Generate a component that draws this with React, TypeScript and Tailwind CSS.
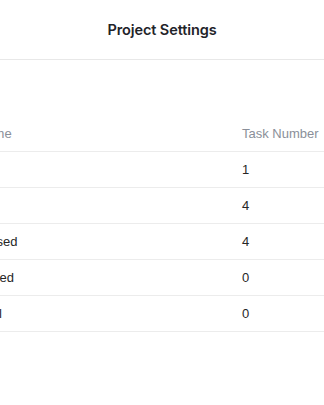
import React from 'react';

const statuses = [
  { name: 'QA', count: 1 },
  { name: 'UI', count: 4 },
  { name: 'Closed', count: 4 },
  { name: 'Saved', count: 0 },
  { name: 'Trial', count: 0 },
];

export default function App() {
  return (
    <div className="min-h-screen bg-white font-['Inter',sans-serif] overflow-hidden">
      {/* Top bar */}
      <div className="h-[60px] flex items-center justify-center border-b border-[#e8e8e8]">
        <h1 className="text-[14.5px] font-semibold text-[#1f2329] tracking-[-0.1px]">Project Settings</h1>
      </div>

      {/* Status table (scrolled so the name column is partly hidden) */}
      <div className="mt-[56px] overflow-hidden">
        <div className="-ml-[39px] w-[390px] font-['Liberation_Sans',Arial,sans-serif] text-[13px]">
          <div className="grid grid-cols-[265px_125px] h-[36px] items-center border-b border-[#ececec] text-[#8a8f99]">
            <div className="px-4">Name</div>
            <div className="px-4">Task Number</div>
          </div>
          {statuses.map((s) => (
            <div
              key={s.name}
              className="grid grid-cols-[265px_125px] h-[36px] items-center border-b border-[#ececec] text-[#262626]"
            >
              <div className="px-4">{s.name}</div>
              <div className="px-4">{s.count}</div>
            </div>
          ))}
        </div>
      </div>
    </div>
  );
}
